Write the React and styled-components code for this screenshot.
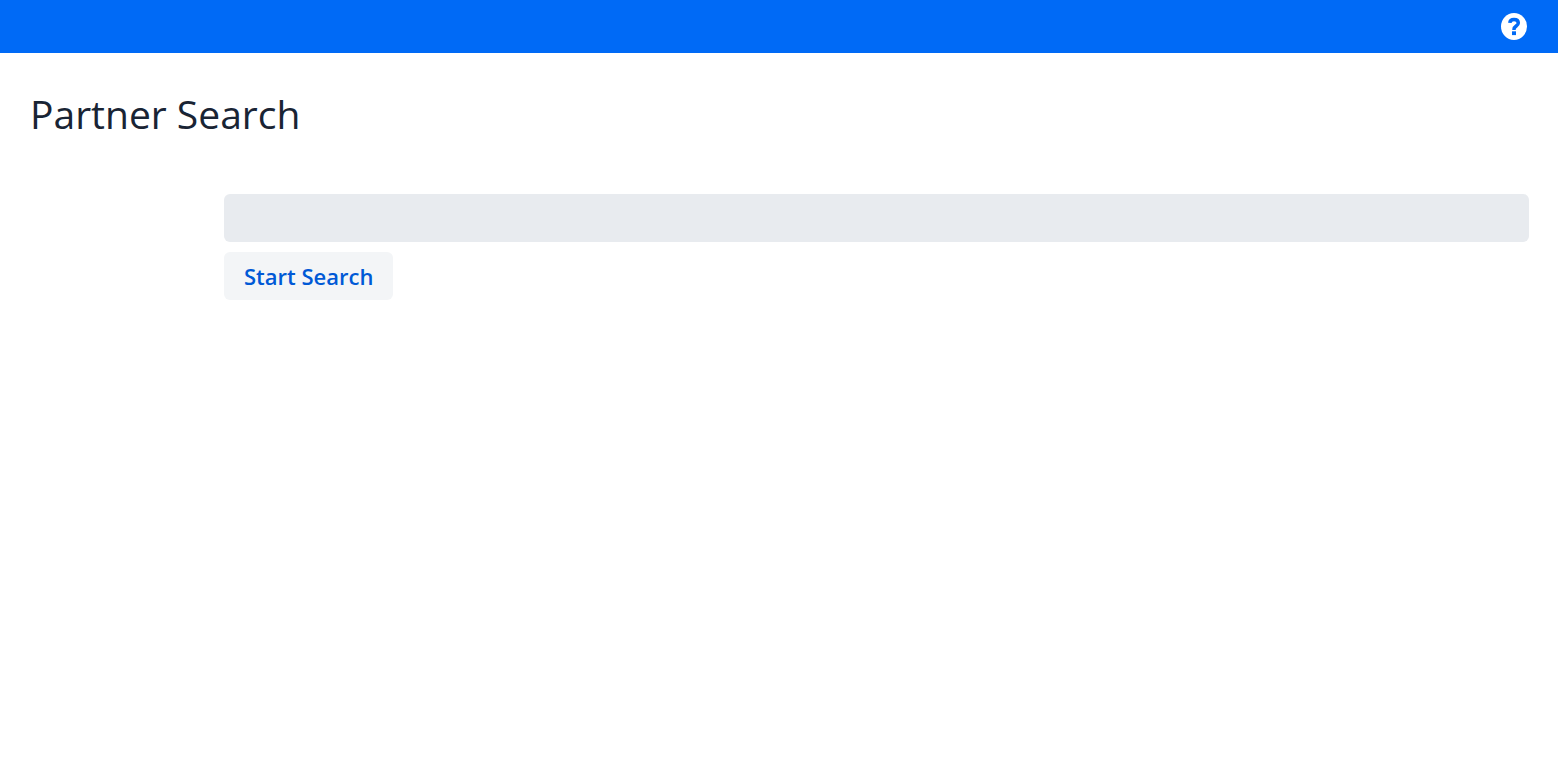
import React, { useState } from "react";
import styled, { createGlobalStyle } from "styled-components";

const GlobalStyle = createGlobalStyle`
  body {
    margin: 0;
    background: #fff;
    color: #192434;
    font-family: "Open Sans", "Noto Sans", sans-serif;
  }
`;

const StyledHeader = styled.header`
  display: flex;
  align-items: center;
  justify-content: flex-end;
  height: 53px;
  padding: 0 31px;
  background: #006af6;
`;

const StyledHelpButton = styled.button`
  display: flex;
  padding: 0;
  border: none;
  background: none;
  color: #fff;
  cursor: pointer;
`;

const StyledMain = styled.main`
  padding: 32px 29px 32px 30px;
`;

const StyledTitle = styled.h1`
  margin: 0;
  font-size: 39px;
  line-height: 58px;
  font-weight: 400;
`;

const StyledForm = styled.form`
  display: flex;
  flex-direction: column;
  align-items: flex-start;
  gap: 10px;
  margin: 51px 0 0 194px;
`;

const StyledInput = styled.input`
  box-sizing: border-box;
  width: 100%;
  height: 48px;
  padding: 0 12px;
  border: none;
  border-radius: 6px;
  background: #e8ebef;
  color: inherit;
  font: inherit;
  font-size: 22px;
`;

const StyledSearchButton = styled.button`
  height: 48px;
  padding: 0 20px;
  border: none;
  border-radius: 6px;
  background: #f3f5f7;
  color: #0059d6;
  font-family: inherit;
  font-size: 22px;
  font-weight: 600;
  cursor: pointer;
`;

const HelpIcon = () => (
  <svg width="26" height="27" viewBox="0 0 26 27" aria-hidden="true">
    <ellipse cx="13" cy="13.5" rx="13" ry="13.5" fill="currentColor" />
    <path
      d="M8.8 9.8C9 7.6 10.7 6.6 13 6.6c2.5 0 4.3 1.2 4.3 3.4 0 3-4.3 3-4.3 6.2v.8"
      fill="none"
      stroke="#006af6"
      strokeWidth="3.5"
    />
    <rect x="11" y="18.3" width="4" height="3.8" fill="#006af6" />
  </svg>
);

const App = () => {
  const [term, setTerm] = useState("");

  const onSubmit = (event) => {
    event.preventDefault();
  };

  return (
    <>
      <GlobalStyle />
      <StyledHeader>
        <StyledHelpButton type="button" aria-label="Help">
          <HelpIcon />
        </StyledHelpButton>
      </StyledHeader>
      <StyledMain>
        <StyledTitle>Partner Search</StyledTitle>
        <StyledForm onSubmit={onSubmit}>
          <StyledInput
            type="text"
            aria-label="Partner"
            value={term}
            onChange={(event) => setTerm(event.target.value)}
          />
          <StyledSearchButton type="submit">Start Search</StyledSearchButton>
        </StyledForm>
      </StyledMain>
    </>
  );
};

export default App;
